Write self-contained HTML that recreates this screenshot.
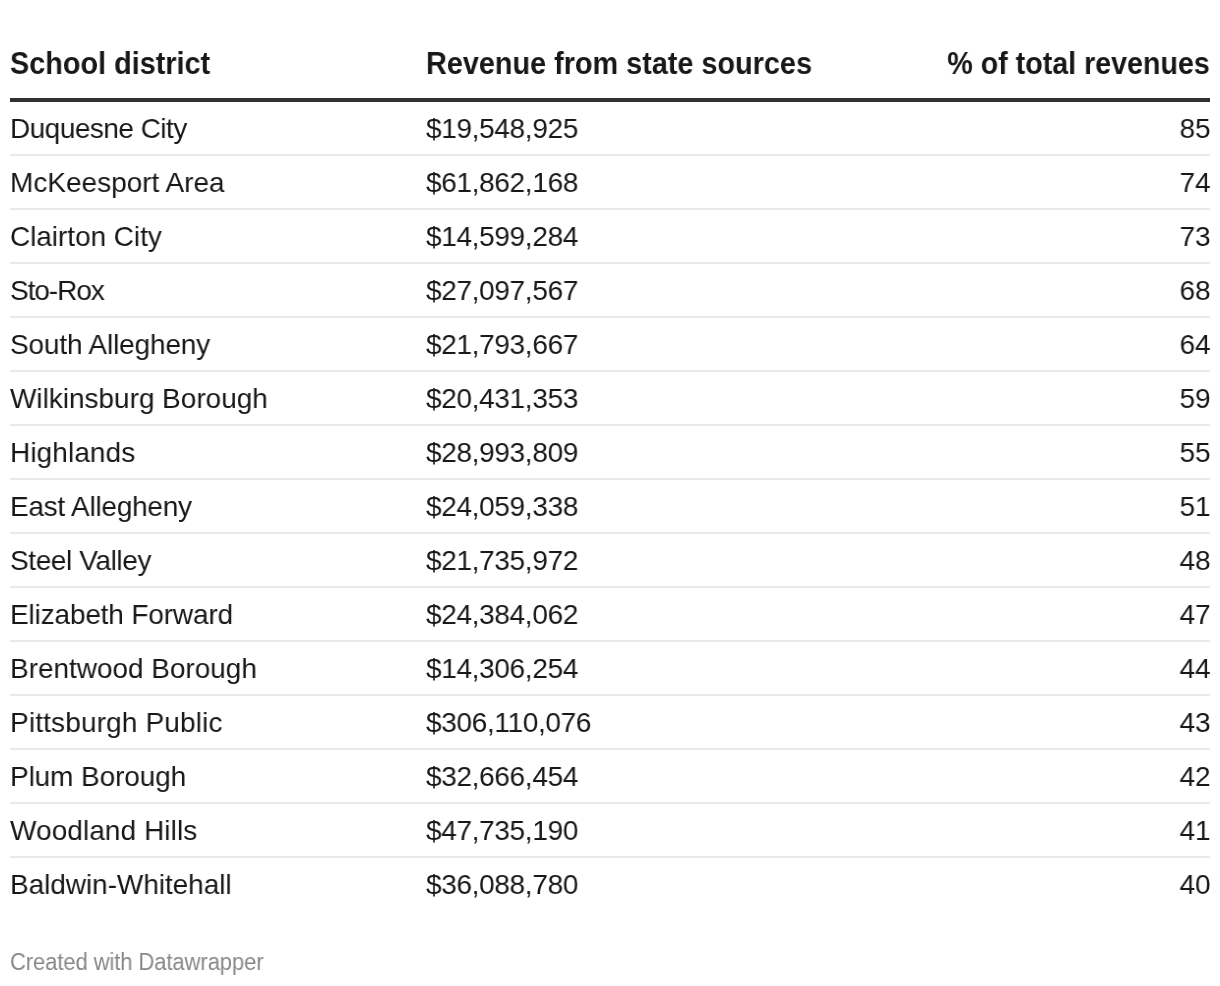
<!DOCTYPE html><html><head><meta charset="utf-8"><style>
html,body{margin:0;padding:0;background:#fff;}
body{width:1220px;height:986px;position:relative;overflow:hidden;font-family:"Liberation Sans",sans-serif;color:#181818;}
.t{position:absolute;white-space:nowrap;line-height:1;font-size:28.5px;will-change:transform;}
.h{font-weight:bold;letter-spacing:0px;font-size:31.5px;transform:scaleX(0.915);transform-origin:0 0;}
.hr{transform-origin:100% 0;transform:scaleX(0.909);}
.c1,.c2,.c3{transform:scaleX(0.9825);transform-origin:0 0;}
.c3{transform-origin:100% 0;}
.c1{left:10px;letter-spacing:0px;}
.c2{left:426px;letter-spacing:-0.35px;}
.c3{right:9.5px;letter-spacing:0px;}
.hl{position:absolute;left:10px;width:1200px;top:98px;height:4px;background:#303030;}
.sep{position:absolute;left:10px;width:1200px;height:2px;background:#e9e9e9;}
.foot{position:absolute;left:10px;top:951px;font-size:23px;line-height:1;will-change:transform;color:#888888;white-space:nowrap;letter-spacing:-0.09px;transform:scaleX(0.9565);transform-origin:0 0;}
</style></head><body>
<div class="t h" style="left:10px;top:48px">School district</div>
<div class="t h" style="left:426px;top:48px">Revenue from state sources</div>
<div class="t h hr" style="right:10px;top:48px">% of total revenues</div>
<div class="hl"></div>
<div class="t c1" style="top:114px;letter-spacing:-0.54px">Duquesne City</div>
<div class="t c2" style="top:114px">$19,548,925</div>
<div class="t c3" style="top:114px">85</div>
<div class="sep" style="top:154px"></div>
<div class="t c1" style="top:168px;letter-spacing:-0.01px">McKeesport Area</div>
<div class="t c2" style="top:168px">$61,862,168</div>
<div class="t c3" style="top:168px">74</div>
<div class="sep" style="top:208px"></div>
<div class="t c1" style="top:222px;letter-spacing:-0.06px">Clairton City</div>
<div class="t c2" style="top:222px">$14,599,284</div>
<div class="t c3" style="top:222px">73</div>
<div class="sep" style="top:262px"></div>
<div class="t c1" style="top:276px;letter-spacing:-1.07px">Sto-Rox</div>
<div class="t c2" style="top:276px">$27,097,567</div>
<div class="t c3" style="top:276px">68</div>
<div class="sep" style="top:316px"></div>
<div class="t c1" style="top:330px;letter-spacing:-0.16px">South Allegheny</div>
<div class="t c2" style="top:330px">$21,793,667</div>
<div class="t c3" style="top:330px">64</div>
<div class="sep" style="top:370px"></div>
<div class="t c1" style="top:384px;letter-spacing:-0.03px">Wilkinsburg Borough</div>
<div class="t c2" style="top:384px">$20,431,353</div>
<div class="t c3" style="top:384px">59</div>
<div class="sep" style="top:424px"></div>
<div class="t c1" style="top:438px;letter-spacing:0.09px">Highlands</div>
<div class="t c2" style="top:438px">$28,993,809</div>
<div class="t c3" style="top:438px">55</div>
<div class="sep" style="top:478px"></div>
<div class="t c1" style="top:492px;letter-spacing:-0.25px">East Allegheny</div>
<div class="t c2" style="top:492px">$24,059,338</div>
<div class="t c3" style="top:492px">51</div>
<div class="sep" style="top:532px"></div>
<div class="t c1" style="top:546px;letter-spacing:-0.4px">Steel Valley</div>
<div class="t c2" style="top:546px">$21,735,972</div>
<div class="t c3" style="top:546px">48</div>
<div class="sep" style="top:586px"></div>
<div class="t c1" style="top:600px;letter-spacing:-0.16px">Elizabeth Forward</div>
<div class="t c2" style="top:600px">$24,384,062</div>
<div class="t c3" style="top:600px">47</div>
<div class="sep" style="top:640px"></div>
<div class="t c1" style="top:654px;letter-spacing:-0.04px">Brentwood Borough</div>
<div class="t c2" style="top:654px">$14,306,254</div>
<div class="t c3" style="top:654px">44</div>
<div class="sep" style="top:694px"></div>
<div class="t c1" style="top:708px;letter-spacing:0.15px">Pittsburgh Public</div>
<div class="t c2" style="top:708px">$306,110,076</div>
<div class="t c3" style="top:708px">43</div>
<div class="sep" style="top:748px"></div>
<div class="t c1" style="top:762px;letter-spacing:-0.11px">Plum Borough</div>
<div class="t c2" style="top:762px">$32,666,454</div>
<div class="t c3" style="top:762px">42</div>
<div class="sep" style="top:802px"></div>
<div class="t c1" style="top:816px;letter-spacing:0.08px">Woodland Hills</div>
<div class="t c2" style="top:816px">$47,735,190</div>
<div class="t c3" style="top:816px">41</div>
<div class="sep" style="top:856px"></div>
<div class="t c1" style="top:870px;letter-spacing:-0.06px">Baldwin-Whitehall</div>
<div class="t c2" style="top:870px">$36,088,780</div>
<div class="t c3" style="top:870px">40</div>
<div class="foot">Created with Datawrapper</div>
</body></html>
